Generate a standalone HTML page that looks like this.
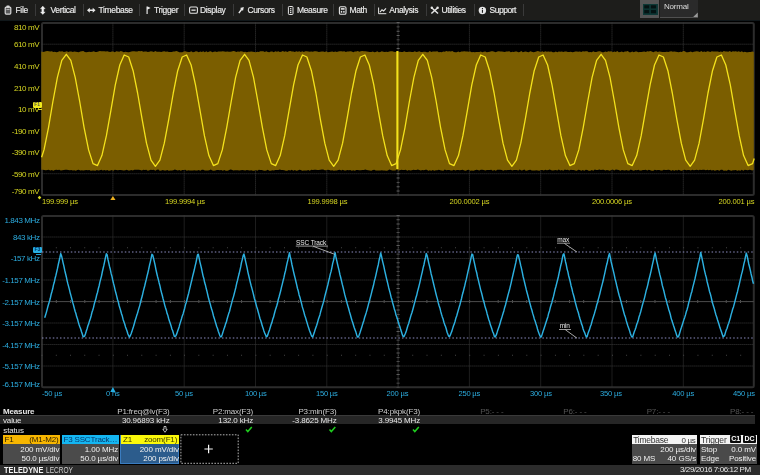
<!DOCTYPE html>
<html>
<head>
<meta charset="utf-8">
<title>Oscilloscope</title>
<style>
html,body{margin:0;padding:0;background:#000;}
body{filter:blur(0.35px);width:760px;height:475px;overflow:hidden;position:relative;font-family:"Liberation Sans",sans-serif;color:#ddd;}
#menubar{position:absolute;left:0;top:0;width:760px;height:20px;background:#1d1d1b;border-bottom:1.2px solid #10171a;}
.mi{position:absolute;top:5px;font-size:8.5px;line-height:10px;color:#ececec;white-space:nowrap;letter-spacing:-0.35px;-webkit-text-stroke:0.15px #ececec;}
.sep{position:absolute;top:3.7px;width:1px;height:12px;background:#3a3a3a;}
.ico{position:absolute;top:0;left:0;}
.yl{position:absolute;font-size:8px;line-height:9px;color:#d6d622;white-space:nowrap;text-align:right;letter-spacing:-0.4px;}
.bl{position:absolute;font-size:8px;line-height:9px;color:#2cacdf;white-space:nowrap;text-align:right;letter-spacing:-0.4px;}
.xl{position:absolute;font-size:7.6px;line-height:9px;white-space:nowrap;letter-spacing:-0.2px;}
.mt{position:absolute;font-size:8px;line-height:9px;color:#e8e8e8;white-space:nowrap;letter-spacing:-0.15px;}
.mt.r{text-align:right;}
.dim{color:#555;}
.desc{position:absolute;top:434.5px;width:57.5px;height:29.2px;background:#4b4b4b;}
.desc .h{position:absolute;left:0;top:0;right:0;height:9.5px;font-size:8px;line-height:9.6px;color:#2a1c00;white-space:nowrap;letter-spacing:-0.15px;}
.desc .h span{position:absolute;top:0;}
.desc .v{position:absolute;right:0.7px;font-size:8px;line-height:9px;color:#f0f0f0;white-space:nowrap;letter-spacing:-0.1px;}
.box{position:absolute;background:#4a4a4a;}
.box .t{position:absolute;font-size:8px;line-height:9px;color:#f0f0f0;white-space:nowrap;letter-spacing:-0.1px;}
</style>
</head>
<body>

<!-- plots -->
<svg class="ico" width="760" height="475" viewBox="0 0 760 475" style="position:absolute;left:0;top:0">
<rect x="42.00" y="23.00" width="711.80" height="172.00" fill="#000" stroke="#2c2c2c" stroke-width="2" rx="1.5"/>
<line x1="112.90" y1="22.6" x2="112.90" y2="195.3" stroke="#3a3a3a" stroke-width="1" stroke-dasharray="1 1"/>
<line x1="184.20" y1="22.6" x2="184.20" y2="195.3" stroke="#3a3a3a" stroke-width="1" stroke-dasharray="1 1"/>
<line x1="255.50" y1="22.6" x2="255.50" y2="195.3" stroke="#3a3a3a" stroke-width="1" stroke-dasharray="1 1"/>
<line x1="326.80" y1="22.6" x2="326.80" y2="195.3" stroke="#3a3a3a" stroke-width="1" stroke-dasharray="1 1"/>
<line x1="398.10" y1="22.6" x2="398.10" y2="195.3" stroke="#555" stroke-width="1" stroke-dasharray="1 1"/>
<line x1="469.40" y1="22.6" x2="469.40" y2="195.3" stroke="#3a3a3a" stroke-width="1" stroke-dasharray="1 1"/>
<line x1="540.70" y1="22.6" x2="540.70" y2="195.3" stroke="#3a3a3a" stroke-width="1" stroke-dasharray="1 1"/>
<line x1="612.00" y1="22.6" x2="612.00" y2="195.3" stroke="#3a3a3a" stroke-width="1" stroke-dasharray="1 1"/>
<line x1="683.30" y1="22.6" x2="683.30" y2="195.3" stroke="#3a3a3a" stroke-width="1" stroke-dasharray="1 1"/>
<line x1="41.6" y1="44.19" x2="753.8" y2="44.19" stroke="#3a3a3a" stroke-width="1" stroke-dasharray="1 1"/>
<line x1="41.6" y1="65.78" x2="753.8" y2="65.78" stroke="#3a3a3a" stroke-width="1" stroke-dasharray="1 1"/>
<line x1="41.6" y1="87.36" x2="753.8" y2="87.36" stroke="#3a3a3a" stroke-width="1" stroke-dasharray="1 1"/>
<line x1="41.6" y1="108.95" x2="753.8" y2="108.95" stroke="#555" stroke-width="1" stroke-dasharray="1 1"/>
<line x1="41.6" y1="130.54" x2="753.8" y2="130.54" stroke="#3a3a3a" stroke-width="1" stroke-dasharray="1 1"/>
<line x1="41.6" y1="152.12" x2="753.8" y2="152.12" stroke="#3a3a3a" stroke-width="1" stroke-dasharray="1 1"/>
<line x1="41.6" y1="173.71" x2="753.8" y2="173.71" stroke="#3a3a3a" stroke-width="1" stroke-dasharray="1 1"/>
<polygon points="41.3,51.5 42.8,51.9 44.3,51.7 45.8,51.2 47.3,51.1 48.8,51.2 50.3,51.6 51.8,51.2 53.3,51.9 54.8,51.8 56.3,52.3 57.8,52.1 59.3,51.3 60.8,51.5 62.3,51.3 63.8,51.9 65.3,51.8 66.8,51.2 68.3,51.9 69.8,51.5 71.3,51.6 72.8,52.1 74.3,51.4 75.8,51.7 77.3,52.0 78.8,52.3 80.3,51.6 81.8,51.3 83.3,51.1 84.8,52.0 86.3,52.2 87.8,51.9 89.3,51.8 90.8,52.1 92.3,51.7 93.8,51.2 95.3,51.9 96.8,52.1 98.3,51.6 99.8,51.1 101.3,51.3 102.8,51.2 104.3,51.3 105.8,51.6 107.3,51.2 108.8,51.8 110.3,52.1 111.8,51.4 113.3,51.5 114.8,52.2 116.3,51.3 117.8,51.4 119.3,51.8 120.8,51.1 122.3,51.5 123.8,52.2 125.3,51.7 126.8,51.9 128.3,52.2 129.8,52.1 131.3,51.6 132.8,51.2 134.3,51.2 135.8,51.4 137.3,51.5 138.8,51.1 140.3,51.2 141.8,51.1 143.3,51.8 144.8,51.4 146.3,51.5 147.8,52.1 149.3,51.7 150.8,51.2 152.3,51.5 153.8,52.1 155.3,51.1 156.8,51.7 158.3,51.8 159.8,51.7 161.3,52.1 162.8,51.4 164.3,51.3 165.8,51.7 167.3,51.5 168.8,52.1 170.3,52.1 171.8,52.1 173.3,51.4 174.8,51.5 176.3,51.1 177.8,51.4 179.3,52.2 180.8,52.2 182.3,52.2 183.8,51.4 185.3,51.3 186.8,51.8 188.3,52.1 189.8,51.9 191.3,51.2 192.8,52.2 194.3,52.0 195.8,51.3 197.3,51.5 198.8,52.3 200.3,51.6 201.8,52.0 203.3,51.3 204.8,52.2 206.3,51.3 207.8,52.3 209.3,51.5 210.8,51.3 212.3,52.3 213.8,51.7 215.3,51.6 216.8,52.1 218.3,51.4 219.8,51.4 221.3,51.4 222.8,51.3 224.3,51.5 225.8,51.8 227.3,51.6 228.8,51.7 230.3,51.7 231.8,51.6 233.3,51.1 234.8,51.3 236.3,52.0 237.8,51.5 239.3,51.8 240.8,51.2 242.3,51.4 243.8,52.0 245.3,51.8 246.8,52.2 248.3,51.8 249.8,51.7 251.3,51.6 252.8,51.7 254.3,51.9 255.8,52.2 257.3,51.8 258.8,52.1 260.3,51.2 261.8,51.2 263.3,51.2 264.8,52.0 266.3,51.3 267.8,51.9 269.3,52.2 270.8,51.4 272.3,51.6 273.8,52.3 275.3,51.3 276.8,51.7 278.3,51.3 279.8,52.0 281.3,51.8 282.8,51.1 284.3,51.8 285.8,51.2 287.3,52.0 288.8,51.2 290.3,51.1 291.8,51.4 293.3,51.6 294.8,52.1 296.3,51.3 297.8,51.8 299.3,51.2 300.8,51.9 302.3,51.2 303.8,51.9 305.3,51.2 306.8,51.2 308.3,51.6 309.8,51.8 311.3,51.4 312.8,51.7 314.3,51.2 315.8,51.2 317.3,51.5 318.8,52.0 320.3,51.7 321.8,51.5 323.3,51.4 324.8,52.0 326.3,51.3 327.8,52.2 329.3,52.1 330.8,51.7 332.3,51.6 333.8,51.9 335.3,51.5 336.8,51.9 338.3,51.6 339.8,51.2 341.3,51.2 342.8,51.4 344.3,51.2 345.8,52.1 347.3,51.4 348.8,51.5 350.3,51.3 351.8,51.4 353.3,52.3 354.8,51.4 356.3,51.5 357.8,51.1 359.3,51.7 360.8,51.3 362.3,51.1 363.8,51.2 365.3,51.2 366.8,51.5 368.3,51.8 369.8,52.0 371.3,52.0 372.8,51.6 374.3,52.3 375.8,52.0 377.3,51.2 378.8,52.2 380.3,52.0 381.8,51.3 383.3,51.7 384.8,52.1 386.3,51.8 387.8,51.9 389.3,51.4 390.8,51.3 392.3,51.2 393.8,51.8 395.3,51.9 396.8,51.7 398.3,52.1 399.8,51.7 401.3,51.9 402.8,52.0 404.3,51.2 405.8,52.0 407.3,52.0 408.8,51.7 410.3,51.7 411.8,52.0 413.3,51.9 414.8,51.3 416.3,52.0 417.8,51.8 419.3,51.2 420.8,51.9 422.3,51.9 423.8,51.7 425.3,51.7 426.8,52.2 428.3,52.3 429.8,51.1 431.3,52.1 432.8,51.6 434.3,51.4 435.8,51.4 437.3,51.3 438.8,52.2 440.3,52.1 441.8,52.2 443.3,51.4 444.8,51.7 446.3,51.1 447.8,51.6 449.3,51.3 450.8,51.5 452.3,51.1 453.8,52.1 455.3,52.2 456.8,52.2 458.3,51.5 459.8,52.3 461.3,51.5 462.8,51.4 464.3,51.2 465.8,51.4 467.3,51.4 468.8,51.7 470.3,51.5 471.8,52.2 473.3,51.9 474.8,52.2 476.3,52.0 477.8,52.0 479.3,52.0 480.8,51.4 482.3,52.2 483.8,51.7 485.3,51.5 486.8,52.3 488.3,51.9 489.8,51.8 491.3,51.3 492.8,51.3 494.3,51.7 495.8,52.2 497.3,51.6 498.8,51.3 500.3,51.5 501.8,51.4 503.3,51.8 504.8,52.0 506.3,51.6 507.8,51.6 509.3,51.2 510.8,52.3 512.3,51.7 513.8,52.1 515.3,51.4 516.8,51.6 518.3,52.2 519.8,52.1 521.3,51.1 522.8,52.2 524.3,51.8 525.8,51.6 527.3,52.1 528.8,52.3 530.3,51.2 531.8,51.7 533.3,52.2 534.8,51.9 536.3,51.6 537.8,51.1 539.3,51.4 540.8,51.9 542.3,51.3 543.8,51.9 545.3,51.2 546.8,51.7 548.3,51.6 549.8,51.8 551.3,51.5 552.8,52.3 554.3,52.2 555.8,51.4 557.3,52.3 558.8,51.5 560.3,51.7 561.8,51.6 563.3,51.9 564.8,51.4 566.3,51.5 567.8,51.9 569.3,52.1 570.8,51.7 572.3,52.3 573.8,52.1 575.3,51.4 576.8,51.5 578.3,51.7 579.8,51.4 581.3,51.9 582.8,51.3 584.3,51.4 585.8,51.3 587.3,51.2 588.8,52.2 590.3,52.0 591.8,52.2 593.3,51.3 594.8,52.0 596.3,51.9 597.8,51.5 599.3,51.3 600.8,51.4 602.3,52.2 603.8,52.3 605.3,51.5 606.8,52.1 608.3,51.2 609.8,51.5 611.3,51.3 612.8,52.2 614.3,51.6 615.8,52.0 617.3,51.1 618.8,52.2 620.3,52.0 621.8,51.5 623.3,52.2 624.8,51.4 626.3,51.5 627.8,51.1 629.3,52.2 630.8,52.2 632.3,51.4 633.8,52.2 635.3,51.6 636.8,51.6 638.3,52.2 639.8,52.1 641.3,52.1 642.8,51.8 644.3,51.5 645.8,52.0 647.3,51.3 648.8,51.4 650.3,51.1 651.8,51.5 653.3,52.2 654.8,51.4 656.3,51.2 657.8,52.0 659.3,51.4 660.8,51.8 662.3,52.0 663.8,51.9 665.3,52.1 666.8,51.8 668.3,52.0 669.8,51.4 671.3,51.3 672.8,51.8 674.3,51.6 675.8,51.7 677.3,52.1 678.8,52.3 680.3,51.7 681.8,52.1 683.3,51.1 684.8,51.2 686.3,52.3 687.8,52.2 689.3,52.1 690.8,51.4 692.3,52.2 693.8,51.8 695.3,51.4 696.8,51.3 698.3,51.4 699.8,51.9 701.3,51.1 702.8,51.9 704.3,51.5 705.8,52.1 707.3,51.2 708.8,51.6 710.3,51.9 711.8,51.3 713.3,51.6 714.8,51.5 716.3,51.5 717.8,51.5 719.3,52.1 720.8,51.5 722.3,52.0 723.8,51.1 725.3,51.6 726.8,51.6 728.3,51.7 729.8,51.1 731.3,51.9 732.8,51.2 734.3,51.5 735.8,51.3 737.3,51.7 738.8,51.2 740.3,52.1 741.8,51.3 743.3,52.2 744.8,51.7 746.3,52.2 747.8,52.2 749.3,52.1 750.8,52.0 752.3,51.6 753.8,52.1 753.8,169.8 752.3,170.6 750.8,169.9 749.3,169.8 747.8,170.3 746.3,170.1 744.8,169.7 743.3,170.8 741.8,169.8 740.3,170.8 738.8,170.2 737.3,170.7 735.8,169.9 734.3,170.2 732.8,170.3 731.3,170.7 729.8,170.3 728.3,169.8 726.8,170.7 725.3,170.6 723.8,170.7 722.3,169.8 720.8,169.8 719.3,170.8 717.8,170.1 716.3,170.3 714.8,170.7 713.3,169.9 711.8,170.4 710.3,169.7 708.8,170.3 707.3,169.7 705.8,170.3 704.3,169.8 702.8,169.8 701.3,170.0 699.8,169.8 698.3,170.3 696.8,169.8 695.3,170.0 693.8,170.3 692.3,169.7 690.8,170.5 689.3,170.1 687.8,170.0 686.3,170.3 684.8,169.8 683.3,170.0 681.8,170.7 680.3,170.6 678.8,169.7 677.3,170.4 675.8,169.9 674.3,170.8 672.8,170.0 671.3,170.7 669.8,169.9 668.3,169.8 666.8,170.0 665.3,170.0 663.8,169.7 662.3,170.6 660.8,170.4 659.3,170.1 657.8,170.1 656.3,170.2 654.8,169.7 653.3,170.8 651.8,170.8 650.3,170.3 648.8,169.7 647.3,170.5 645.8,169.7 644.3,170.0 642.8,170.0 641.3,170.5 639.8,170.5 638.3,169.8 636.8,170.2 635.3,169.9 633.8,170.7 632.3,170.2 630.8,169.6 629.3,170.4 627.8,170.5 626.3,169.9 624.8,170.5 623.3,170.3 621.8,169.9 620.3,170.7 618.8,169.9 617.3,169.7 615.8,169.6 614.3,170.6 612.8,169.6 611.3,170.0 609.8,170.7 608.3,170.2 606.8,170.1 605.3,170.6 603.8,169.8 602.3,169.7 600.8,170.0 599.3,169.6 597.8,170.0 596.3,170.1 594.8,169.6 593.3,170.7 591.8,170.0 590.3,170.8 588.8,170.7 587.3,170.1 585.8,169.7 584.3,170.8 582.8,170.1 581.3,170.7 579.8,170.1 578.3,169.8 576.8,170.7 575.3,170.5 573.8,169.9 572.3,170.0 570.8,169.8 569.3,170.5 567.8,169.8 566.3,170.1 564.8,169.6 563.3,170.7 561.8,169.9 560.3,170.4 558.8,169.6 557.3,170.4 555.8,169.9 554.3,170.2 552.8,170.4 551.3,170.2 549.8,169.6 548.3,169.9 546.8,170.3 545.3,169.7 543.8,170.4 542.3,169.9 540.8,170.0 539.3,170.7 537.8,170.5 536.3,170.3 534.8,170.5 533.3,170.5 531.8,170.4 530.3,169.8 528.8,169.9 527.3,170.6 525.8,170.7 524.3,169.6 522.8,170.2 521.3,170.5 519.8,169.6 518.3,170.6 516.8,170.1 515.3,169.9 513.8,169.9 512.3,170.4 510.8,169.8 509.3,169.9 507.8,170.0 506.3,170.2 504.8,170.1 503.3,170.7 501.8,169.9 500.3,169.7 498.8,169.7 497.3,169.8 495.8,170.8 494.3,169.9 492.8,170.7 491.3,169.8 489.8,170.1 488.3,170.0 486.8,169.9 485.3,170.5 483.8,170.0 482.3,169.8 480.8,169.7 479.3,170.4 477.8,170.1 476.3,169.7 474.8,170.3 473.3,170.7 471.8,170.6 470.3,170.7 468.8,169.8 467.3,169.9 465.8,170.7 464.3,170.6 462.8,169.7 461.3,170.1 459.8,170.3 458.3,170.1 456.8,169.9 455.3,170.5 453.8,169.7 452.3,170.5 450.8,170.6 449.3,170.0 447.8,170.0 446.3,170.2 444.8,169.6 443.3,170.7 441.8,170.4 440.3,170.2 438.8,169.8 437.3,170.2 435.8,170.3 434.3,170.7 432.8,169.9 431.3,170.8 429.8,170.2 428.3,170.7 426.8,169.8 425.3,169.7 423.8,170.2 422.3,169.9 420.8,170.4 419.3,169.9 417.8,169.6 416.3,170.0 414.8,169.9 413.3,169.7 411.8,170.3 410.3,170.4 408.8,170.1 407.3,170.8 405.8,169.8 404.3,169.9 402.8,169.9 401.3,169.7 399.8,170.2 398.3,170.5 396.8,169.6 395.3,170.4 393.8,170.4 392.3,170.6 390.8,170.0 389.3,169.6 387.8,170.4 386.3,170.7 384.8,170.6 383.3,170.6 381.8,170.2 380.3,170.6 378.8,170.4 377.3,170.6 375.8,170.4 374.3,169.8 372.8,170.0 371.3,170.7 369.8,170.4 368.3,170.2 366.8,169.9 365.3,169.6 363.8,170.1 362.3,169.9 360.8,170.2 359.3,170.2 357.8,170.1 356.3,170.0 354.8,170.8 353.3,170.3 351.8,170.8 350.3,170.1 348.8,170.2 347.3,169.9 345.8,170.4 344.3,170.6 342.8,169.8 341.3,170.5 339.8,169.8 338.3,170.0 336.8,170.4 335.3,170.6 333.8,170.8 332.3,170.2 330.8,170.6 329.3,170.1 327.8,169.7 326.3,170.2 324.8,170.3 323.3,169.6 321.8,169.6 320.3,169.8 318.8,169.9 317.3,170.0 315.8,169.8 314.3,169.8 312.8,169.9 311.3,169.8 309.8,170.7 308.3,170.0 306.8,170.6 305.3,170.6 303.8,170.6 302.3,170.7 300.8,170.1 299.3,169.7 297.8,170.4 296.3,170.7 294.8,169.9 293.3,170.7 291.8,169.8 290.3,170.5 288.8,169.9 287.3,170.8 285.8,170.8 284.3,170.2 282.8,170.0 281.3,170.1 279.8,169.6 278.3,170.0 276.8,170.0 275.3,170.1 273.8,170.6 272.3,170.2 270.8,170.7 269.3,170.8 267.8,169.8 266.3,170.5 264.8,170.7 263.3,170.4 261.8,169.9 260.3,170.1 258.8,169.8 257.3,170.7 255.8,169.9 254.3,170.7 252.8,170.7 251.3,170.2 249.8,170.4 248.3,170.2 246.8,170.1 245.3,170.5 243.8,170.2 242.3,169.9 240.8,170.3 239.3,170.5 237.8,170.2 236.3,170.3 234.8,170.2 233.3,170.6 231.8,169.8 230.3,169.6 228.8,170.2 227.3,170.7 225.8,170.7 224.3,170.1 222.8,170.7 221.3,170.1 219.8,170.3 218.3,170.0 216.8,169.9 215.3,170.6 213.8,170.7 212.3,170.4 210.8,169.6 209.3,170.3 207.8,170.4 206.3,170.6 204.8,170.6 203.3,169.8 201.8,169.8 200.3,170.7 198.8,170.1 197.3,170.6 195.8,170.5 194.3,170.2 192.8,170.5 191.3,170.4 189.8,170.6 188.3,170.2 186.8,170.7 185.3,169.8 183.8,169.9 182.3,170.0 180.8,170.8 179.3,170.1 177.8,170.4 176.3,169.9 174.8,169.6 173.3,170.2 171.8,170.5 170.3,170.6 168.8,170.8 167.3,169.9 165.8,170.5 164.3,170.5 162.8,170.0 161.3,170.4 159.8,170.8 158.3,169.6 156.8,169.8 155.3,170.7 153.8,169.8 152.3,169.9 150.8,169.7 149.3,170.2 147.8,170.8 146.3,169.7 144.8,170.0 143.3,169.8 141.8,170.6 140.3,170.0 138.8,169.8 137.3,169.7 135.8,169.8 134.3,169.7 132.8,170.4 131.3,170.1 129.8,170.6 128.3,170.5 126.8,169.7 125.3,170.3 123.8,170.4 122.3,170.3 120.8,170.1 119.3,169.9 117.8,170.2 116.3,169.9 114.8,169.8 113.3,170.7 111.8,170.1 110.3,170.6 108.8,170.7 107.3,170.1 105.8,170.6 104.3,169.9 102.8,170.5 101.3,169.7 99.8,170.2 98.3,170.4 96.8,169.9 95.3,170.8 93.8,170.4 92.3,170.4 90.8,170.7 89.3,170.1 87.8,170.3 86.3,170.0 84.8,170.3 83.3,170.4 81.8,170.2 80.3,170.5 78.8,169.7 77.3,169.9 75.8,170.7 74.3,170.3 72.8,170.4 71.3,170.0 69.8,170.3 68.3,170.1 66.8,169.8 65.3,169.7 63.8,170.0 62.3,170.3 60.8,170.6 59.3,169.7 57.8,169.9 56.3,169.7 54.8,170.1 53.3,170.7 51.8,169.9 50.3,170.6 48.8,169.7 47.3,170.1 45.8,170.2 44.3,170.0 42.8,169.7 41.3,169.8" fill="#7b5e00"/>
<polyline points="41.6,157.3 44.0,149.9 48.5,127.6 52.9,101.5 57.4,77.4 61.8,60.4 66.3,54.3 70.8,60.4 75.2,77.4 79.7,101.5 84.1,127.6 88.6,149.9 93.0,163.6 97.5,165.6 101.9,155.6 106.4,135.7 110.9,110.3 115.3,84.9 119.8,65.0 124.2,55.0 128.7,57.0 133.1,70.7 137.6,93.0 142.1,119.1 146.5,143.2 151.0,160.2 155.4,166.3 159.9,160.2 164.3,143.2 168.8,119.1 173.3,93.0 177.7,70.7 182.2,57.0 186.6,55.0 191.1,65.0 195.5,84.9 200.0,110.3 204.4,135.7 208.9,155.6 213.4,165.6 217.8,163.6 222.3,149.9 226.7,127.6 231.2,101.5 235.6,77.4 240.1,60.4 244.6,54.3 249.0,60.4 253.5,77.4 257.9,101.5 262.4,127.6 266.8,149.9 271.3,163.6 275.7,165.6 280.2,155.6 284.7,135.7 289.1,110.3 293.6,84.9 298.0,65.0 302.5,55.0 306.9,57.0 311.4,70.7 315.9,93.0 320.3,119.1 324.8,143.2 329.2,160.2 333.7,166.3 338.1,160.2 342.6,143.2 347.0,119.1 351.5,93.0 356.0,70.7 360.4,57.0 364.9,55.0 369.3,65.0 373.8,84.9 378.2,110.3 382.7,135.7 387.2,155.6 391.6,165.6 396.1,163.6 400.5,149.9 405.0,127.6 409.4,101.5 413.9,77.4 418.3,60.4 422.8,54.3 427.3,60.4 431.7,77.4 436.2,101.5 440.6,127.6 445.1,149.9 449.5,163.6 454.0,165.6 458.5,155.6 462.9,135.7 467.4,110.3 471.8,84.9 476.3,65.0 480.7,55.0 485.2,57.0 489.6,70.7 494.1,93.0 498.6,119.1 503.0,143.2 507.5,160.2 511.9,166.3 516.4,160.2 520.8,143.2 525.3,119.1 529.8,93.0 534.2,70.7 538.7,57.0 543.1,55.0 547.6,65.0 552.0,84.9 556.5,110.3 560.9,135.7 565.4,155.6 569.9,165.6 574.3,163.6 578.8,149.9 583.2,127.6 587.7,101.5 592.1,77.4 596.6,60.4 601.1,54.3 605.5,60.4 610.0,77.4 614.4,101.5 618.9,127.6 623.3,149.9 627.8,163.6 632.2,165.6 636.7,155.6 641.2,135.7 645.6,110.3 650.1,84.9 654.5,65.0 659.0,55.0 663.4,57.0 667.9,70.7 672.3,93.0 676.8,119.1 681.3,143.2 685.7,160.2 690.2,166.3 694.6,160.2 699.1,143.2 703.5,119.1 708.0,93.0 712.5,70.7 716.9,57.0 721.4,55.0 725.8,65.0 730.3,84.9 734.7,110.3 739.2,135.7 743.6,155.6 748.1,165.6 752.6,163.6 754.2,158.5" fill="none" stroke="#f4e21c" stroke-width="1.3" stroke-linejoin="round"/>
<line x1="397.4" y1="51" x2="397.4" y2="169" stroke="#f4e21c" stroke-width="2.1"/>
<!-- center tick marks plot 1 -->
<line x1="398.1" y1="22.1" x2="398.1" y2="51" stroke="#606060" stroke-width="3" stroke-dasharray="0.9 3.42"/>
<line x1="398.1" y1="173.3" x2="398.1" y2="195" stroke="#606060" stroke-width="3" stroke-dasharray="0.9 3.42"/>

<rect x="42.00" y="215.90" width="711.80" height="171.30" fill="#000" stroke="#2c2c2c" stroke-width="2" rx="1.5"/>
<line x1="112.90" y1="215.5" x2="112.90" y2="387.5" stroke="#3a3a3a" stroke-width="1" stroke-dasharray="1 1"/>
<line x1="184.20" y1="215.5" x2="184.20" y2="387.5" stroke="#3a3a3a" stroke-width="1" stroke-dasharray="1 1"/>
<line x1="255.50" y1="215.5" x2="255.50" y2="387.5" stroke="#3a3a3a" stroke-width="1" stroke-dasharray="1 1"/>
<line x1="326.80" y1="215.5" x2="326.80" y2="387.5" stroke="#3a3a3a" stroke-width="1" stroke-dasharray="1 1"/>
<line x1="398.10" y1="215.5" x2="398.10" y2="387.5" stroke="#555" stroke-width="1" stroke-dasharray="1 1"/>
<line x1="469.40" y1="215.5" x2="469.40" y2="387.5" stroke="#3a3a3a" stroke-width="1" stroke-dasharray="1 1"/>
<line x1="540.70" y1="215.5" x2="540.70" y2="387.5" stroke="#3a3a3a" stroke-width="1" stroke-dasharray="1 1"/>
<line x1="612.00" y1="215.5" x2="612.00" y2="387.5" stroke="#3a3a3a" stroke-width="1" stroke-dasharray="1 1"/>
<line x1="683.30" y1="215.5" x2="683.30" y2="387.5" stroke="#3a3a3a" stroke-width="1" stroke-dasharray="1 1"/>
<line x1="41.6" y1="237.00" x2="753.8" y2="237.00" stroke="#3a3a3a" stroke-width="1" stroke-dasharray="1 1"/>
<line x1="41.6" y1="258.50" x2="753.8" y2="258.50" stroke="#3a3a3a" stroke-width="1" stroke-dasharray="1 1"/>
<line x1="41.6" y1="280.00" x2="753.8" y2="280.00" stroke="#3a3a3a" stroke-width="1" stroke-dasharray="1 1"/>
<line x1="41.6" y1="301.50" x2="753.8" y2="301.50" stroke="#555" stroke-width="1" stroke-dasharray="1 1"/>
<line x1="41.6" y1="323.00" x2="753.8" y2="323.00" stroke="#3a3a3a" stroke-width="1" stroke-dasharray="1 1"/>
<line x1="41.6" y1="344.50" x2="753.8" y2="344.50" stroke="#3a3a3a" stroke-width="1" stroke-dasharray="1 1"/>
<line x1="41.6" y1="366.00" x2="753.8" y2="366.00" stroke="#3a3a3a" stroke-width="1" stroke-dasharray="1 1"/>
<!-- center tick marks plot 2 -->
<line x1="398.1" y1="215" x2="398.1" y2="387.5" stroke="#5c5c5c" stroke-width="3.2" stroke-dasharray="0.9 3.4"/>
<line x1="41.6" y1="301.6" x2="753.8" y2="301.6" stroke="#5c5c5c" stroke-width="3" stroke-dasharray="0.9 13.354"/>
<line x1="41.6" y1="301.6" x2="753.8" y2="301.6" stroke="#484848" stroke-width="1"/>
<!-- small dots at quarter rows -->
<line x1="41.6" y1="247.75" x2="753.8" y2="247.75" stroke="#555" stroke-width="1" stroke-dasharray="0.8 13.46"/>
<line x1="41.6" y1="355.25" x2="753.8" y2="355.25" stroke="#555" stroke-width="1" stroke-dasharray="0.8 13.46"/>
<!-- cursor dotted lines -->
<line x1="42" y1="252" x2="753.5" y2="252" stroke="#8c8cc0" stroke-width="1.1" stroke-dasharray="1.5 2.1"/>
<line x1="42" y1="338" x2="753.5" y2="338" stroke="#8c8cc0" stroke-width="1.1" stroke-dasharray="1.5 2.1"/>
<polyline points="44.7,317.7 45.5,315.2 46.3,312.6 47.1,309.6 47.9,306.5 48.7,303.7 49.5,301.2 50.3,298.3 51.1,294.5 51.9,291.8 52.7,288.8 53.5,284.9 54.3,282.3 55.1,278.3 55.9,275.4 56.7,271.8 57.5,268.4 58.3,264.5 59.1,261.0 59.9,257.5 60.7,253.6 61.5,255.7 62.3,259.2 63.1,262.8 63.9,266.1 64.7,270.2 65.5,273.5 66.3,276.7 67.1,280.6 67.9,283.9 68.7,286.9 69.5,289.9 70.3,293.3 71.1,296.1 71.9,299.2 72.7,302.4 73.5,305.1 74.3,308.3 75.1,311.2 75.9,313.5 76.7,316.8 77.5,318.9 78.3,322.1 79.1,324.7 79.9,327.0 80.7,329.0 81.5,331.8 82.3,334.0 83.1,336.7 83.9,336.6 84.7,335.9 85.5,333.7 86.3,331.1 87.1,328.8 87.9,325.8 88.7,323.9 89.5,320.9 90.3,318.7 91.1,316.0 91.9,312.6 92.7,310.3 93.5,307.6 94.3,303.9 95.1,301.2 95.9,298.6 96.7,295.0 97.5,292.5 98.3,288.8 99.1,286.0 99.9,282.1 100.7,279.1 101.5,276.1 102.3,272.0 103.1,268.5 103.9,265.2 104.7,261.4 105.5,257.4 106.3,253.8 107.1,254.7 107.9,259.2 108.7,262.6 109.5,266.4 110.3,269.3 111.1,273.4 111.9,276.2 112.7,280.0 113.5,283.4 114.3,286.4 115.1,290.1 115.9,293.0 116.7,296.1 117.5,299.5 118.3,301.8 119.1,305.5 119.9,308.1 120.7,310.7 121.5,313.8 122.3,316.1 123.1,319.4 123.9,321.7 124.7,324.0 125.5,326.9 126.3,329.0 127.1,331.2 127.9,334.0 128.7,335.7 129.5,337.2 130.3,335.6 131.1,333.7 131.9,331.6 132.7,328.9 133.5,326.5 134.3,323.7 135.1,320.8 135.9,318.2 136.7,315.6 137.5,313.3 138.3,310.4 139.1,307.6 139.9,305.1 140.7,301.4 141.5,298.5 142.3,295.8 143.1,292.1 143.9,288.9 144.7,286.0 145.5,282.5 146.3,279.4 147.1,275.9 147.9,272.7 148.7,269.2 149.5,265.3 150.3,262.1 151.1,258.3 151.9,254.3 152.7,255.0 153.5,258.1 154.3,261.7 155.1,265.2 155.9,269.3 156.7,273.0 157.5,276.4 158.3,279.4 159.1,282.7 159.9,285.7 160.7,289.5 161.5,292.6 162.3,295.5 163.1,298.9 163.9,301.7 164.7,305.1 165.5,307.8 166.3,310.2 167.1,313.6 167.9,315.6 168.7,318.7 169.5,321.2 170.3,323.6 171.1,325.9 171.9,329.0 172.7,330.8 173.5,333.6 174.3,336.3 175.1,336.6 175.9,335.8 176.7,333.9 177.5,331.5 178.3,329.2 179.1,326.9 179.9,323.9 180.7,321.4 181.5,318.8 182.3,315.9 183.1,313.9 183.9,311.0 184.7,308.2 185.5,304.6 186.3,302.4 187.1,299.3 187.9,296.0 188.7,293.2 189.5,289.7 190.3,286.3 191.1,282.9 191.9,279.7 192.7,276.1 193.5,273.0 194.3,269.8 195.1,266.2 195.9,262.8 196.7,259.0 197.5,254.8 198.3,254.2 199.1,257.8 199.9,261.8 200.7,265.2 201.5,268.5 202.3,272.4 203.1,276.1 203.9,278.8 204.7,282.8 205.5,285.3 206.3,288.8 207.1,291.9 207.9,295.5 208.7,298.8 209.5,301.6 210.3,304.2 211.1,307.6 211.9,309.9 212.7,312.6 213.5,316.0 214.3,318.4 215.1,321.1 215.9,323.7 216.7,326.5 217.5,328.5 218.3,331.2 219.1,333.4 219.9,335.9 220.7,336.9 221.5,336.5 222.3,334.2 223.1,331.6 223.9,329.1 224.7,327.1 225.5,324.1 226.3,322.3 227.1,319.0 227.9,316.2 228.7,313.6 229.5,311.5 230.3,308.2 231.1,305.1 231.9,302.1 232.7,299.1 233.5,296.6 234.3,293.5 235.1,290.4 235.9,287.2 236.7,283.3 237.5,280.4 238.3,276.9 239.1,273.8 239.9,270.3 240.7,266.9 241.5,262.5 242.3,259.6 243.1,255.9 243.9,254.0 244.7,257.0 245.5,260.8 246.3,264.4 247.1,267.9 247.9,272.1 248.7,275.5 249.5,278.8 250.3,282.3 251.1,285.5 251.9,288.4 252.7,291.4 253.5,294.5 254.3,298.2 255.1,300.7 255.9,303.8 256.7,306.8 257.5,309.3 258.3,312.3 259.1,315.1 259.9,318.2 260.7,320.5 261.5,323.0 262.3,326.1 263.1,328.2 263.9,330.9 264.7,333.1 265.5,334.8 266.3,336.8 267.1,336.4 267.9,334.6 268.7,331.9 269.5,329.9 270.3,327.3 271.1,324.5 271.9,322.6 272.7,319.3 273.5,317.3 274.3,314.0 275.1,311.0 275.9,308.4 276.7,306.0 277.5,303.3 278.3,299.4 279.1,296.8 279.9,293.7 280.7,290.8 281.5,287.1 282.3,284.1 283.1,280.6 283.9,277.7 284.7,273.8 285.5,270.9 286.3,266.8 287.1,263.1 287.9,259.9 288.7,256.0 289.5,252.8 290.3,257.0 291.1,260.2 291.9,264.5 292.7,268.0 293.5,271.6 294.3,275.0 295.1,278.1 295.9,281.5 296.7,284.8 297.5,288.5 298.3,291.0 299.1,294.9 299.9,297.2 300.7,300.4 301.5,303.4 302.3,306.9 303.1,309.4 303.9,312.1 304.7,315.3 305.5,317.4 306.3,320.2 307.1,322.9 307.9,325.6 308.7,328.1 309.5,330.4 310.3,332.5 311.1,334.8 311.9,336.5 312.7,337.0 313.5,334.8 314.3,332.6 315.1,329.7 315.9,327.5 316.7,325.3 317.5,322.6 318.3,319.6 319.1,317.3 319.9,314.9 320.7,311.6 321.5,308.7 322.3,306.0 323.1,303.4 323.9,300.6 324.7,296.9 325.5,293.8 326.3,290.7 327.1,287.6 327.9,284.5 328.7,280.9 329.5,277.7 330.3,274.1 331.1,271.4 331.9,267.6 332.7,263.4 333.5,260.6 334.3,256.1 335.1,252.6 335.9,256.9 336.7,260.4 337.5,264.0 338.3,267.3 339.1,270.7 339.9,274.5 340.7,277.5 341.5,280.9 342.3,284.4 343.1,287.4 343.9,290.9 344.7,294.4 345.5,297.4 346.3,300.2 347.1,303.3 347.9,306.1 348.7,308.7 349.5,311.9 350.3,314.5 351.1,317.5 351.9,320.3 352.7,322.5 353.5,325.2 354.3,327.8 355.1,329.9 355.9,332.1 356.7,334.9 357.5,337.0 358.3,337.0 359.1,335.2 359.9,333.0 360.7,330.5 361.5,328.0 362.3,325.4 363.1,322.7 363.9,320.4 364.7,317.3 365.5,314.9 366.3,312.4 367.1,309.6 367.9,306.6 368.7,303.4 369.5,300.6 370.3,297.6 371.1,294.6 371.9,291.3 372.7,288.3 373.5,285.3 374.3,281.3 375.1,278.4 375.9,275.1 376.7,271.3 377.5,267.8 378.3,264.7 379.1,260.2 379.9,257.0 380.7,252.9 381.5,256.2 382.3,260.1 383.1,263.4 383.9,266.6 384.7,270.6 385.5,274.0 386.3,277.6 387.1,280.8 387.9,284.2 388.7,287.7 389.5,290.6 390.3,293.6 391.1,297.2 391.9,299.6 392.7,303.0 393.5,305.7 394.3,308.9 395.1,311.2 395.9,314.7 396.7,316.8 397.5,319.2 398.3,322.0 399.1,324.7 399.9,326.8 400.7,329.6 401.5,332.0 402.3,334.6 403.1,336.4 403.9,336.7 404.7,335.0 405.5,333.2 406.3,331.0 407.1,328.2 407.9,325.5 408.7,323.5 409.5,320.5 410.3,317.7 411.1,314.9 411.9,312.8 412.7,310.0 413.5,307.0 414.3,303.9 415.1,301.1 415.9,297.7 416.7,295.3 417.5,291.6 418.3,288.7 419.1,285.6 419.9,282.3 420.7,278.6 421.5,275.1 422.3,271.8 423.1,267.9 423.9,265.0 424.7,260.9 425.5,257.7 426.3,253.4 427.1,255.4 427.9,259.0 428.7,262.8 429.5,266.2 430.3,269.6 431.1,273.7 431.9,276.8 432.7,280.1 433.5,283.5 434.3,286.9 435.1,290.1 435.9,293.5 436.7,296.6 437.5,299.4 438.3,302.9 439.1,305.7 439.9,307.9 440.7,311.4 441.5,314.3 442.3,316.9 443.1,319.0 443.9,322.2 444.7,324.6 445.5,326.5 446.3,329.0 447.1,332.2 447.9,334.3 448.7,336.1 449.5,336.6 450.3,335.2 451.1,333.0 451.9,331.1 452.7,328.4 453.5,325.7 454.3,323.9 455.1,321.2 455.9,318.0 456.7,316.0 457.5,313.0 458.3,310.3 459.1,307.4 459.9,304.7 460.7,301.6 461.5,298.7 462.3,295.0 463.1,292.3 463.9,289.0 464.7,286.0 465.5,282.4 466.3,279.4 467.1,275.7 467.9,272.0 468.7,268.5 469.5,264.8 470.3,261.5 471.1,257.5 471.9,254.1 472.7,254.7 473.5,258.8 474.3,262.4 475.1,266.1 475.9,269.9 476.7,272.7 477.5,276.9 478.3,279.9 479.1,283.3 479.9,286.7 480.7,290.1 481.5,292.8 482.3,296.0 483.1,299.5 483.9,301.7 484.7,305.2 485.5,308.1 486.3,310.4 487.1,313.7 487.9,316.5 488.7,319.4 489.5,321.4 490.3,324.6 491.1,326.7 491.9,329.1 492.7,331.8 493.5,333.4 494.3,336.3 495.1,337.1 495.9,335.7 496.7,333.9 497.5,331.1 498.3,328.8 499.1,326.4 499.9,324.1 500.7,321.0 501.5,318.6 502.3,315.9 503.1,313.3 503.9,310.7 504.7,307.4 505.5,305.0 506.3,301.7 507.1,298.7 507.9,295.5 508.7,292.6 509.5,289.8 510.3,286.3 511.1,283.1 511.9,279.4 512.7,276.0 513.5,272.5 514.3,269.2 515.1,265.7 515.9,262.2 516.7,257.9 517.5,254.8 518.3,254.9 519.1,258.4 519.9,261.6 520.7,265.4 521.5,268.7 522.3,272.4 523.1,276.5 523.9,279.6 524.7,283.0 525.5,286.4 526.3,289.7 527.1,292.7 527.9,295.8 528.7,298.9 529.5,301.9 530.3,304.8 531.1,307.8 531.9,310.2 532.7,313.4 533.5,315.9 534.3,318.9 535.1,320.9 535.9,323.5 536.7,325.9 537.5,329.0 538.3,331.6 539.1,333.7 539.9,335.7 540.7,337.2 541.5,336.4 542.3,333.9 543.1,331.3 543.9,328.9 544.7,326.6 545.5,324.0 546.3,321.5 547.1,319.1 547.9,316.7 548.7,313.2 549.5,310.9 550.3,307.5 551.1,304.7 551.9,302.4 552.7,299.2 553.5,296.4 554.3,292.9 555.1,289.3 555.9,286.5 556.7,283.4 557.5,280.3 558.3,277.0 559.1,273.1 559.9,269.5 560.7,265.7 561.5,262.6 562.3,258.5 563.1,254.7 563.9,253.7 564.7,257.4 565.5,261.7 566.3,264.8 567.1,269.1 567.9,271.9 568.7,276.0 569.5,278.8 570.3,282.0 571.1,285.9 571.9,288.7 572.7,292.4 573.5,295.0 574.3,298.0 575.1,301.6 575.9,304.5 576.7,307.6 577.5,310.3 578.3,312.5 579.1,315.7 579.9,318.5 580.7,320.9 581.5,323.9 582.3,325.8 583.1,328.9 583.9,331.1 584.7,332.8 585.5,335.1 586.3,337.1 587.1,336.6 587.9,333.7 588.7,331.6 589.5,329.6 590.3,326.7 591.1,324.8 591.9,321.9 592.7,318.9 593.5,316.5 594.3,314.0 595.1,311.1 595.9,308.5 596.7,305.1 597.5,302.8 598.3,299.4 599.1,296.6 599.9,293.5 600.7,290.1 601.5,286.9 602.3,283.9 603.1,280.8 603.9,277.2 604.7,273.6 605.5,269.9 606.3,266.1 607.1,263.3 607.9,259.4 608.7,255.8 609.5,253.5 610.3,257.5 611.1,261.5 611.9,265.0 612.7,268.4 613.5,271.6 614.3,275.2 615.1,279.0 615.9,281.9 616.7,285.5 617.5,288.7 618.3,292.1 619.1,295.2 619.9,297.8 620.7,300.6 621.5,303.8 622.3,306.8 623.1,309.8 623.9,312.8 624.7,315.6 625.5,317.6 626.3,320.9 627.1,323.5 627.9,326.0 628.7,328.2 629.5,330.4 630.3,333.3 631.1,335.5 631.9,337.0 632.7,336.9 633.5,334.3 634.3,331.7 635.1,329.7 635.9,327.5 636.7,324.5 637.5,322.5 638.3,320.0 639.1,316.7 639.9,314.4 640.7,311.7 641.5,308.6 642.3,305.5 643.1,302.6 643.9,300.1 644.7,297.1 645.5,293.7 646.3,290.2 647.1,287.6 647.9,284.3 648.7,280.5 649.5,277.5 650.3,274.3 651.1,270.8 651.9,267.0 652.7,263.3 653.5,259.8 654.3,255.7 655.1,252.9 655.9,256.6 656.7,260.8 657.5,264.1 658.3,267.9 659.1,271.3 659.9,274.9 660.7,277.9 661.5,281.2 662.3,285.4 663.1,288.1 663.9,291.0 664.7,294.6 665.5,297.9 666.3,300.3 667.1,303.7 667.9,306.4 668.7,309.4 669.5,311.8 670.3,314.5 671.1,318.1 671.9,320.6 672.7,322.9 673.5,325.5 674.3,327.7 675.1,330.6 675.9,332.6 676.7,335.4 677.5,337.0 678.3,336.9 679.1,335.1 679.9,332.2 680.7,329.6 681.5,327.3 682.3,324.8 683.1,322.2 683.9,319.6 684.7,317.4 685.5,314.9 686.3,311.8 687.1,309.4 687.9,306.5 688.7,302.8 689.5,300.3 690.3,297.1 691.1,293.8 691.9,291.4 692.7,287.6 693.5,284.6 694.3,281.3 695.1,278.2 695.9,274.6 696.7,270.8 697.5,267.3 698.3,263.5 699.1,260.6 699.9,256.9 700.7,252.4 701.5,256.0 702.3,259.9 703.1,263.7 703.9,267.8 704.7,271.3 705.5,274.7 706.3,277.4 707.1,281.5 707.9,284.7 708.7,287.9 709.5,291.4 710.3,293.7 711.1,296.9 711.9,300.5 712.7,303.6 713.5,306.3 714.3,308.8 715.1,311.9 715.9,314.8 716.7,317.0 717.5,319.8 718.3,322.3 719.1,324.8 719.9,327.6 720.7,329.7 721.5,332.1 722.3,334.4 723.1,336.8 723.9,336.3 724.7,335.2 725.5,332.4 726.3,329.9 727.1,328.3 727.9,325.2 728.7,323.3 729.5,320.6 730.3,318.0 731.1,314.6 731.9,312.1 732.7,309.0 733.5,306.9 734.3,303.9 735.1,300.7 735.9,297.6 736.7,294.4 737.5,291.7 738.3,288.2 739.1,285.0 739.9,281.3 740.7,278.0 741.5,274.4 742.3,271.6 743.1,267.9 743.9,263.9 744.7,260.9 745.5,256.7 746.3,253.1 747.1,255.7 747.9,259.5 748.7,263.7 749.5,266.8 750.3,270.2 751.1,274.0 751.9,277.2 752.7,281.1 753.5,283.8" fill="none" stroke="#2cb0e0" stroke-width="1.45" stroke-linejoin="round"/>
<!-- label leader lines -->
<line x1="295.8" y1="246.1" x2="328" y2="246.1" stroke="#9a9a9a" stroke-width="1"/>
<line x1="313.2" y1="246.3" x2="334.7" y2="254.3" stroke="#cfcfcf" stroke-width="0.8"/>
<line x1="557" y1="243.2" x2="570" y2="243.2" stroke="#9a9a9a" stroke-width="1"/>
<line x1="564.4" y1="243.4" x2="577" y2="252.1" stroke="#cfcfcf" stroke-width="0.8"/>
<line x1="559" y1="329.5" x2="571" y2="329.5" stroke="#9a9a9a" stroke-width="1"/>
<line x1="565.3" y1="329.7" x2="577" y2="338.2" stroke="#cfcfcf" stroke-width="0.8"/>
<!-- trigger / zero markers -->
<polygon points="110.3,200.1 115.5,200.1 112.9,195.9" fill="#ecb020"/>
<polygon points="110.3,392 115.5,392 112.9,387" fill="#28b0e4"/>
<polygon points="39.5,195.7 41.3,197.6 39.5,199.5 37.7,197.6" fill="#d6d622"/>
</svg>

<!-- menu bar -->
<div id="menubar">
  <svg class="ico" width="760" height="20" viewBox="0 0 760 20"><g transform="translate(0,0.5)">
    <!-- File -->
    <rect x="5.2" y="6.6" width="5.6" height="7" rx="1" fill="#5a5a5a" stroke="#d8d8d8" stroke-width="1.2"/>
    <rect x="6.4" y="5" width="3.2" height="2.2" rx="0.6" fill="#d8d8d8"/>
    <rect x="6.4" y="8.6" width="3.2" height="0.9" fill="#bbb"/>
    <!-- Vertical -->
    <path d="M42.8 5.6 L45.2 8.3 H43.8 V11.4 H45.2 L42.8 14.1 L40.4 11.4 H41.8 V8.3 H40.4 Z" fill="#f0f0f0" stroke="#f0f0f0" stroke-width="0.3" stroke-linejoin="round"/>
    <!-- Timebase -->
    <path d="M87 9.7 L89.8 7.2 V8.9 H92.7 V7.2 L95.5 9.7 L92.7 12.2 V10.5 H89.8 V12.2 Z" fill="#e6e6e6"/>
    <!-- Trigger -->
    <path d="M146.5 13.6 V5.9 H147.7 L150.6 7.4 L147.7 9 V13.6 Z" fill="#e6e6e6"/>
    <!-- Display -->
    <rect x="189.6" y="6.5" width="7.8" height="6.2" rx="1.3" fill="none" stroke="#e6e6e6" stroke-width="1.1"/>
    <rect x="191.4" y="9" width="4.2" height="1.3" fill="#e6e6e6"/>
    <!-- Cursors -->
    <path d="M238.3 12.2 L241 8.2 L240 7.6 L243.8 6.6 L243 10.4 L242.1 9.4 L239.4 13 Z" fill="#e6e6e6"/>
    <!-- Measure -->
    <rect x="288.4" y="6" width="4.6" height="8" rx="0.8" fill="none" stroke="#e6e6e6" stroke-width="1"/>
    <rect x="290" y="7.6" width="1.4" height="1.2" fill="#e6e6e6"/><rect x="290" y="9.6" width="1.4" height="1.2" fill="#e6e6e6"/><rect x="290" y="11.4" width="1.4" height="1.2" fill="#e6e6e6"/>
    <!-- Math -->
    <rect x="339.4" y="6.3" width="6.6" height="7.4" rx="1.3" fill="none" stroke="#e6e6e6" stroke-width="1.1"/>
    <rect x="340.8" y="7.6" width="3.8" height="1.6" fill="#e6e6e6"/>
    <rect x="340.8" y="10.4" width="1.4" height="1.8" fill="#e6e6e6"/><rect x="343.2" y="10.4" width="1.4" height="1.8" fill="#e6e6e6"/>
    <!-- Analysis -->
    <path d="M378.6 7 V13.2 H386.3" fill="none" stroke="#e6e6e6" stroke-width="1"/>
    <path d="M380 11.6 L382 9.2 L383.6 10.4 L386 7.8" fill="none" stroke="#e6e6e6" stroke-width="1.1"/>
    <!-- Utilities -->
    <path d="M431.4 7 L438 13 M438 7 L431.4 13" fill="none" stroke="#e6e6e6" stroke-width="1.5"/>
    <circle cx="431.8" cy="7.2" r="1.2" fill="#e6e6e6"/><circle cx="437.6" cy="7.2" r="1.2" fill="#e6e6e6"/>
    <!-- Support -->
    <circle cx="482.4" cy="10" r="3.7" fill="#e6e6e6"/>
    <rect x="481.9" y="9.3" width="1.1" height="3" fill="#1d1d1c"/><rect x="481.9" y="7.5" width="1.1" height="1.1" fill="#1d1d1c"/>
  </g></svg>
  <div class="mi" style="left:15.5px">File</div>
  <div class="mi" style="left:50.5px">Vertical</div>
  <div class="mi" style="left:98.5px">Timebase</div>
  <div class="mi" style="left:154px">Trigger</div>
  <div class="mi" style="left:200px">Display</div>
  <div class="mi" style="left:247.4px">Cursors</div>
  <div class="mi" style="left:297px">Measure</div>
  <div class="mi" style="left:349.5px">Math</div>
  <div class="mi" style="left:389.2px">Analysis</div>
  <div class="mi" style="left:441.5px">Utilities</div>
  <div class="mi" style="left:489.6px;letter-spacing:-0.5px">Support</div>
  <div class="sep" style="left:35px"></div>
  <div class="sep" style="left:83px"></div>
  <div class="sep" style="left:139.2px"></div>
  <div class="sep" style="left:184px"></div>
  <div class="sep" style="left:233px"></div>
  <div class="sep" style="left:282px"></div>
  <div class="sep" style="left:333px"></div>
  <div class="sep" style="left:374px"></div>
  <div class="sep" style="left:425.8px"></div>
  <div class="sep" style="left:474px"></div>
  <div class="sep" style="left:523px"></div>
  <!-- grid mode icon + Normal -->
  <div style="position:absolute;left:640px;top:0;width:19px;height:18px;background:#555;"></div>
  <div style="position:absolute;left:642.5px;top:3.5px;width:15px;height:11.5px;background:#0e3836;"></div>
  <svg class="ico" width="760" height="20" viewBox="0 0 760 20">
    <rect x="644" y="5" width="5.5" height="3.8" fill="#041212" stroke="#0e3836" stroke-width="0.5"/>
    <rect x="650.7" y="5" width="5.5" height="3.8" fill="#041212" stroke="#0e3836" stroke-width="0.5"/>
    <rect x="644" y="9.8" width="5.5" height="3.8" fill="#041212" stroke="#0e3836" stroke-width="0.5"/>
    <rect x="650.7" y="9.8" width="5.5" height="3.8" fill="#041212" stroke="#0e3836" stroke-width="0.5"/>
  </svg>
  <div style="position:absolute;left:659.7px;top:0;width:38.4px;height:18px;background:#2a2a2a;border-bottom:1px solid #505050;box-sizing:border-box;"></div>
  <div class="mi" style="left:663.9px;top:1.5px;font-size:8px;letter-spacing:-0.2px;-webkit-text-stroke:0;color:#dcdcdc">Normal</div>
  <svg class="ico" width="760" height="20" viewBox="0 0 760 20"><polygon points="697.8,12.4 697.8,17 693.2,17" fill="#9a9a9a"/></svg>
</div>

<!-- Y labels plot 1 -->
<div class="yl" style="left:0;width:39.2px;top:23px">810 mV</div>
<div class="yl" style="left:0;width:39.2px;top:40px">610 mV</div>
<div class="yl" style="left:0;width:39.2px;top:62px">410 mV</div>
<div class="yl" style="left:0;width:39.2px;top:83.5px">210 mV</div>
<div class="yl" style="left:0;width:39.2px;top:105px">10 mV</div>
<div class="yl" style="left:0;width:39.2px;top:126.5px">-190 mV</div>
<div class="yl" style="left:0;width:39.2px;top:148px">-390 mV</div>
<div class="yl" style="left:0;width:39.2px;top:169.5px">-590 mV</div>
<div class="yl" style="left:0;width:39.2px;top:187px">-790 mV</div>
<!-- F1 marker -->
<div style="position:absolute;left:32.6px;top:102px;width:9.2px;height:5.7px;background:#f0ea1c;border-radius:1.2px;font-size:5px;line-height:5.7px;color:#554;text-align:center;font-weight:bold;">F1</div>
<div style="position:absolute;left:37.5px;top:108.6px;width:4.3px;height:1.2px;background:#d8d420;"></div>

<!-- X labels plot 1 -->
<div class="xl" style="left:42px;top:196.5px;color:#d6d622">199.999 µs</div>
<div class="xl" style="left:165px;top:196.5px;color:#d6d622">199.9994 µs</div>
<div class="xl" style="left:307.5px;top:196.5px;color:#d6d622">199.9998 µs</div>
<div class="xl" style="left:449.5px;top:196.5px;color:#d6d622">200.0002 µs</div>
<div class="xl" style="left:592px;top:196.5px;color:#d6d622">200.0006 µs</div>
<div class="xl" style="left:718.5px;top:196.5px;color:#d6d622">200.001 µs</div>

<!-- Y labels plot 2 -->
<div class="bl" style="left:0;width:39.5px;top:215.5px">1.843 MHz</div>
<div class="bl" style="left:0;width:39.5px;top:232.5px">843 kHz</div>
<div class="bl" style="left:0;width:39.5px;top:254px">-157 kHz</div>
<div class="bl" style="left:0;width:39.5px;top:276px">-1.157 MHz</div>
<div class="bl" style="left:0;width:39.5px;top:297.5px">-2.157 MHz</div>
<div class="bl" style="left:0;width:39.5px;top:319px">-3.157 MHz</div>
<div class="bl" style="left:0;width:39.5px;top:340.5px">-4.157 MHz</div>
<div class="bl" style="left:0;width:39.5px;top:362px">-5.157 MHz</div>
<div class="bl" style="left:0;width:39.5px;top:379.5px">-6.157 MHz</div>
<!-- F3 marker -->
<div style="position:absolute;left:32.8px;top:247.2px;width:9px;height:5.6px;background:#28b0e4;border-radius:1.2px;font-size:5px;line-height:5.6px;color:#036;text-align:center;font-weight:bold;">F3</div>
<div style="position:absolute;left:35.8px;top:253.7px;width:5.7px;height:1.2px;background:#28a0d0;"></div>

<!-- X labels plot 2 -->
<div class="xl" style="left:42px;top:389px;color:#2cacdf">-50 µs</div>
<div class="xl" style="left:106px;top:389px;color:#2cacdf">0 ns</div>
<div class="xl" style="left:175px;top:389px;color:#2cacdf">50 µs</div>
<div class="xl" style="left:244.9px;top:389px;color:#2cacdf">100 µs</div>
<div class="xl" style="left:315.9px;top:389px;color:#2cacdf">150 µs</div>
<div class="xl" style="left:386.5px;top:389px;color:#2cacdf">200 µs</div>
<div class="xl" style="left:458.4px;top:389px;color:#2cacdf">250 µs</div>
<div class="xl" style="left:530px;top:389px;color:#2cacdf">300 µs</div>
<div class="xl" style="left:600px;top:389px;color:#2cacdf">350 µs</div>
<div class="xl" style="left:672.3px;top:389px;color:#2cacdf">400 µs</div>
<div class="xl" style="left:733px;top:389px;color:#2cacdf">450 µs</div>

<!-- trace labels -->
<div class="mt" style="left:296px;top:238.1px;font-size:6.5px;letter-spacing:-0.1px;">SSC Track</div>
<div class="mt" style="left:557.3px;top:235.1px;font-size:6.5px;">max</div>
<div class="mt" style="left:559.8px;top:321px;font-size:6.5px;">min</div>

<!-- measure table -->
<div style="position:absolute;left:0;top:415px;width:755px;height:9.3px;background:#262626;border-top:1px solid #3a3a3a;box-sizing:border-box;"></div>
<div class="mt" style="left:3px;top:406.5px;font-weight:bold;">Measure</div>
<div class="mt" style="left:3px;top:415.5px;">value</div>
<div class="mt" style="left:3.3px;top:425.7px;">status</div>
<div class="mt r" style="left:100px;width:69.5px;top:406.5px;color:#cfcfcf;">P1:freq@lv(F3)</div>
<div class="mt r" style="left:100px;width:69.5px;top:415.5px;">30.96893 kHz</div>
<div class="mt r" style="left:180px;width:73px;top:406.5px;color:#cfcfcf;">P2:max(F3)</div>
<div class="mt r" style="left:180px;width:73px;top:415.5px;">132.0 kHz</div>
<div class="mt r" style="left:260px;width:76.5px;top:406.5px;color:#cfcfcf;">P3:min(F3)</div>
<div class="mt r" style="left:260px;width:76.5px;top:415.5px;">-3.8625 MHz</div>
<div class="mt r" style="left:340px;width:80px;top:406.5px;color:#cfcfcf;">P4:pkpk(F3)</div>
<div class="mt r" style="left:340px;width:80px;top:415.5px;">3.9945 MHz</div>
<div class="mt dim" style="left:480.2px;top:406.5px;">P5:- - -</div>
<div class="mt dim" style="left:563.3px;top:406.5px;">P6:- - -</div>
<div class="mt dim" style="left:646.7px;top:406.5px;">P7:- - -</div>
<div class="mt dim" style="left:730px;top:406.5px;">P8:- - -</div>
<svg class="ico" width="760" height="475" viewBox="0 0 760 475" style="position:absolute;left:0;top:0;pointer-events:none">
  <!-- status icons -->
  <path d="M164 426.5 H166 V429.3 H167.2 L165 432.3 L162.8 429.3 H164 Z" fill="none" stroke="#e8e8e8" stroke-width="0.75"/>
  <path d="M246 429.6 L247.8 431.6 L251.8 427" fill="none" stroke="#1fd01f" stroke-width="1.5"/>
  <path d="M329.5 429.6 L331.3 431.6 L335.3 427" fill="none" stroke="#1fd01f" stroke-width="1.5"/>
  <path d="M413 429.6 L414.8 431.6 L418.8 427" fill="none" stroke="#1fd01f" stroke-width="1.5"/>
  <!-- add box dashed -->
  <rect x="180.9" y="434.8" width="57.3" height="28.5" fill="none" stroke="#c4c4c4" stroke-width="0.9" stroke-dasharray="1.6 1.4"/>
  <path d="M204.4 449 H212.8 M208.6 444.8 V453.2" stroke="#f8f8f8" stroke-width="1.2" fill="none"/>
</svg>

<!-- descriptor boxes -->
<div class="desc" style="left:2.5px;">
  <div class="h" style="background:#f7b600;"><span style="left:2px">F1</span><span style="right:1.5px;">(M1-M2)</span></div>
  <div class="v" style="top:10.7px;">200 mV/div</div>
  <div class="v" style="top:19.7px;">50.0 µs/div</div>
</div>
<div class="desc" style="left:61.6px;width:57.2px;">
  <div class="h" style="background:#14b6f2;color:#06386a;"><span style="left:1.8px">F3 SSCTrack…</span></div>
  <div class="v" style="top:10.7px;">1.00 MHz</div>
  <div class="v" style="top:19.7px;">50.0 µs/div</div>
</div>
<div class="desc" style="left:120.2px;width:59.3px;background:#2c5c8c;outline:1px solid #3a7cc0;outline-offset:-1px;">
  <div class="h" style="background:#fbf80a;color:#3a3a00;left:0.8px;right:0.8px;top:0.6px;height:9px;line-height:9px;"><span style="left:2px">Z1</span><span style="right:1.5px;">zoom(F1)</span></div>
  <div class="v" style="top:10.7px;">200 mV/div</div>
  <div class="v" style="top:19.7px;">200 ps/div</div>
</div>

<!-- Timebase box -->
<div class="box" style="left:632px;top:435px;width:64.5px;height:28.5px;">
  <div style="position:absolute;left:0;top:0;right:0;height:9px;background:#f4f4f4;"></div>
  <div class="t" style="left:1.2px;top:0.5px;color:#333;font-size:8.5px;letter-spacing:-0.25px;">Timebase</div>
  <div class="t" style="right:1px;top:0.5px;color:#333;font-size:8px;letter-spacing:-0.3px;">0 µs</div>
  <div class="t" style="right:0.5px;top:10px;">200 µs/div</div>
  <div class="t" style="left:0.7px;top:19px;">80 MS</div>
  <div class="t" style="right:0.2px;top:19px;letter-spacing:0;">40 GS/s</div>
</div>
<!-- Trigger box -->
<div class="box" style="left:699.5px;top:435px;width:57px;height:28.5px;">
  <div style="position:absolute;left:0;top:0;right:0;height:9px;background:#f4f4f4;"></div>
  <div class="t" style="left:1.5px;top:0.5px;color:#333;font-size:8.5px;letter-spacing:-0.15px;">Trigger</div>
  <div style="position:absolute;left:30.4px;top:0.2px;width:11.5px;height:7.6px;background:#0c0c0c;border-radius:1px;color:#fff;font-size:7px;line-height:7.2px;overflow:hidden;text-align:center;font-weight:bold;">C1</div>
  <div style="position:absolute;left:43.6px;top:0.2px;width:13px;height:7.6px;background:#0c0c0c;border-radius:1px;color:#fff;font-size:7px;line-height:7.2px;overflow:hidden;text-align:center;font-weight:bold;">DC</div>
  <div class="t" style="left:1.5px;top:10px;">Stop</div>
  <div class="t" style="right:0.4px;top:10px;">0.0 mV</div>
  <div class="t" style="left:1.5px;top:19px;">Edge</div>
  <div class="t" style="right:0.4px;top:19px;">Positive</div>
</div>

<!-- bottom bar -->
<div style="position:absolute;left:0;top:464.5px;width:760px;height:10.5px;background:#2c2c2c;"></div>
<div class="mt" style="left:4px;top:466px;font-size:8.2px;letter-spacing:0;color:#f4f4f4;"><b style="display:inline-block;transform:scaleX(0.9);transform-origin:0 50%;">TELEDYNE</b></div>
<div class="mt" style="left:46px;top:466px;font-size:8.2px;letter-spacing:0;color:#d0d0d0;"><span style="display:inline-block;transform:scaleX(0.8);transform-origin:0 50%;">LECROY</span></div>
<div class="mt" style="left:680px;top:465.2px;font-size:8px;color:#e8e8e8;letter-spacing:-0.4px;">3/29/2016 7:06:12 PM</div>

</body>
</html>
